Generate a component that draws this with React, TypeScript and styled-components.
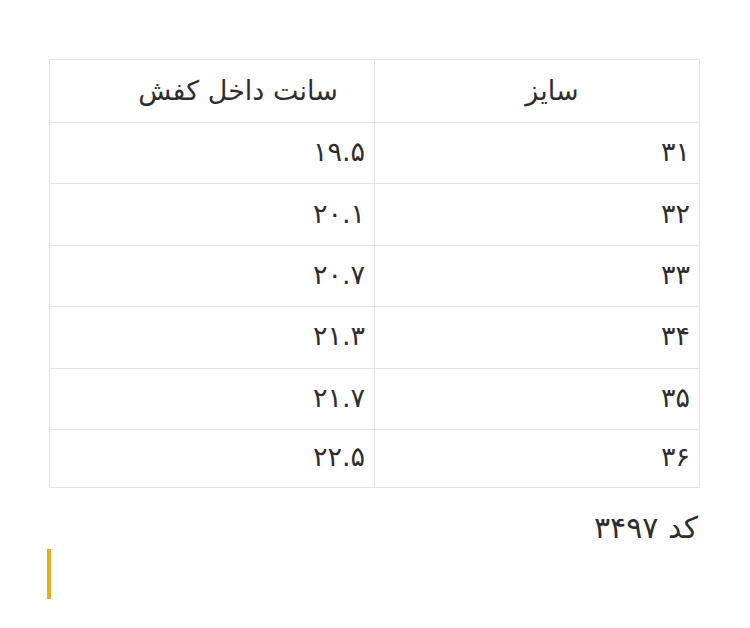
import { createGlobalStyle, styled } from "styled-components";

const GlobalStyle = createGlobalStyle`
  html, body {
    margin: 0;
    padding: 0;
    background: #ffffff;
  }
  body {
    font-family: "DejaVu Sans", "Noto Sans", sans-serif;
    color: #2e2e2e;
  }
`;

const Page = styled.div`
  direction: rtl;
  display: flex;
  flex-direction: column;
  padding: 59px 50px 0 49px;
`;

const Table = styled.table`
  width: 100%;
  border-collapse: collapse;
  table-layout: fixed;
`;

const HeadCell = styled.th<{ $pad: number }>`
  height: 60px;
  padding: 0 0 2px ${(p) => p.$pad}px;
  border: 1px solid #e4e4e4;
  font-size: 27px;
  font-weight: 400;
  text-align: center;
  vertical-align: middle;
`;

const Cell = styled.td<{ $last?: boolean }>`
  height: ${(p) => (p.$last ? "54px" : "57.4px")};
  padding: 0 9px 3px 0;
  border: 1px solid #e4e4e4;
  font-size: 27px;
  text-align: right;
  vertical-align: middle;
`;

const Code = styled.p`
  margin: 22px 2px 0 0;
  font-size: 30px;
  line-height: 1.2;
`;

const Marker = styled.div`
  align-self: flex-end;
  width: 4px;
  height: 50px;
  margin: 3px 0 0 -2px;
  background: #e8ae1c;
`;

const rows = [
  ["۳۱", "۱۹.۵"],
  ["۳۲", "۲۰.۱"],
  ["۳۳", "۲۰.۷"],
  ["۳۴", "۲۱.۳"],
  ["۳۵", "۲۱.۷"],
  ["۳۶", "۲۲.۵"],
];

export default function App() {
  return (
    <>
      <GlobalStyle />
      <Page>
        <Table>
          <thead>
            <tr>
              <HeadCell $pad={30}>سایز</HeadCell>
              <HeadCell $pad={52}>سانت داخل کفش</HeadCell>
            </tr>
          </thead>
          <tbody>
            {rows.map(([size, cm], i) => (
              <tr key={size}>
                <Cell $last={i === rows.length - 1}>{size}</Cell>
                <Cell $last={i === rows.length - 1}>{cm}</Cell>
              </tr>
            ))}
          </tbody>
        </Table>
        <Code>کد ۳۴۹۷</Code>
        <Marker />
      </Page>
    </>
  );
}
